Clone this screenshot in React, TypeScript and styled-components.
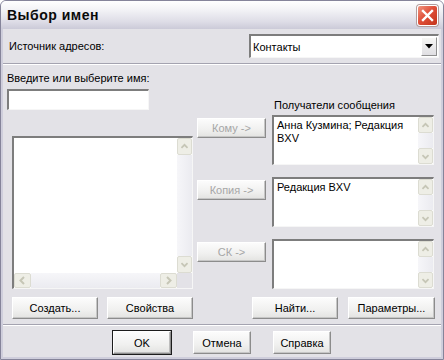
import styled, { createGlobalStyle } from 'styled-components';

const GlobalStyle = createGlobalStyle`
  html, body {
    margin: 0;
    padding: 0;
    background: #ffffff;
  }
  body {
    font-family: 'Liberation Sans', Arial, sans-serif;
    font-size: 11px;
    color: #000;
  }
`;

type Dir = 'up' | 'down' | 'left' | 'right';

const chevrons: Record<Dir, string> = {
  up: 'M4 9 L7.5 5.5 L11 9',
  down: 'M4 6 L7.5 9.5 L11 6',
  left: 'M9 4 L5.5 7.5 L9 11',
  right: 'M6 4 L9.5 7.5 L6 11',
};

const Chevron = ({ dir }: { dir: Dir }) => (
  <svg width="15" height="15" viewBox="0 0 15 15">
    <path d={chevrons[dir]} fill="none" stroke="#c6c6b6" strokeWidth="2" />
  </svg>
);

const App = () => {
  return (
    <>
      <GlobalStyle />
      <Window>
        <TitleBar>
          <Title>Выбор имен</Title>
          <CloseButton>
            <svg width="13" height="13" viewBox="0 0 13 13">
              <path d="M2 2 L11 11 M11 2 L2 11" stroke="#fff" strokeWidth="2.4" strokeLinecap="square" />
            </svg>
          </CloseButton>
        </TitleBar>
        <Body>
          <SourceRow>
            <Label>Источник адресов:</Label>
            <Combo>
              <ComboText>Контакты</ComboText>
              <DropButton>
                <svg width="8" height="5" viewBox="0 0 8 5">
                  <path d="M0 0 H8 L4 4.5 Z" fill="#000" />
                </svg>
              </DropButton>
            </Combo>
          </SourceRow>
          <Etched />
          <Main>
            <LeftCol>
              <Label>Введите или выберите имя:</Label>
              <NameInput />
              <ListBox>
                <ListArea />
                <VScroll>
                  <ScrollBtn $w={15} $h={17}><Chevron dir="up" /></ScrollBtn>
                  <Track $vertical />
                  <ScrollBtn $w={15} $h={17}><Chevron dir="down" /></ScrollBtn>
                </VScroll>
                <HScroll>
                  <ScrollBtn $w={17} $h={15}><Chevron dir="left" /></ScrollBtn>
                  <Track />
                  <ScrollBtn $w={17} $h={15}><Chevron dir="right" /></ScrollBtn>
                </HScroll>
                <Corner />
              </ListBox>
            </LeftCol>
            <RecipientsCol>
              <RecipientsLabel>Получатели сообщения</RecipientsLabel>
              {[
                { btn: 'Кому ->', text: 'Анна Кузмина; Редакция BXV' },
                { btn: 'Копия ->', text: 'Редакция BXV' },
                { btn: 'СК ->', text: '' },
              ].map((r) => (
                <RecipientRow key={r.btn}>
                  <Button $disabled $w={69} $h={20}>{r.btn}</Button>
                  <RecipientBox>
                    <BoxText>{r.text}</BoxText>
                    <VScroll>
                      <ScrollBtn $w={15} $h={16}><Chevron dir="up" /></ScrollBtn>
                      <Track $vertical />
                      <ScrollBtn $w={15} $h={16}><Chevron dir="down" /></ScrollBtn>
                    </VScroll>
                  </RecipientBox>
                </RecipientRow>
              ))}
            </RecipientsCol>
          </Main>
          <ActionRow>
            <ButtonGroup $gap={9}>
              <Button $w={86} $h={22}>Создать...</Button>
              <Button $w={86} $h={22}>Свойства</Button>
            </ButtonGroup>
            <ButtonGroup $gap={10}>
              <Button $w={86} $h={22}>Найти...</Button>
              <Button $w={87} $h={22}>Параметры...</Button>
            </ButtonGroup>
          </ActionRow>
          <Etched $top={5} />
          <Footer>
            <Button $default $w={58} $h={23}>OK</Button>
            <Button $w={58} $h={23}>Отмена</Button>
            <Button $w={58} $h={23}>Справка</Button>
          </Footer>
        </Body>
      </Window>
    </>
  );
};

export default App;

const Window = styled.div`
  width: 444px;
  height: 360px;
  box-sizing: border-box;
  display: flex;
  flex-direction: column;
  background: #cfcedc;
  border: 1px solid #85849a;
  border-radius: 6px 6px 0 0;
  overflow: hidden;
`;

const TitleBar = styled.div`
  height: 28px;
  flex-shrink: 0;
  display: flex;
  align-items: center;
  justify-content: space-between;
  padding: 0 5px 0 6px;
  background: linear-gradient(#ffffff 0%, #f1f1f5 35%, #dddce6 75%, #cbcad8 100%);
`;

const Title = styled.div`
  font-family: 'Liberation Sans', Arial, sans-serif;
  font-size: 14px;
  font-weight: bold;
  letter-spacing: 0.5px;
  color: #0a0a0a;
`;

const CloseButton = styled.div`
  width: 21px;
  height: 21px;
  box-sizing: border-box;
  display: flex;
  align-items: center;
  justify-content: center;
  border: 1px solid #ffffff;
  border-radius: 3px;
  background: linear-gradient(135deg, #f09580 0%, #e0503a 45%, #c3331a 100%);
  box-shadow: 0 0 0 1px #b09c9c;
`;

const Body = styled.div`
  flex: 1;
  display: flex;
  flex-direction: column;
  margin: 0 2px 2px;
  background: #e3e2e7;
`;

const SourceRow = styled.div`
  height: 34px;
  display: flex;
  align-items: center;
  justify-content: space-between;
  padding: 0 2px 0 6px;
`;

const Label = styled.div`
  line-height: 14px;
  white-space: nowrap;
`;

const Sunken = styled.div`
  box-sizing: border-box;
  background: #ffffff;
  border-style: solid;
  border-width: 2px 1px 1px 2px;
  border-color: #7d7d7d #f6f6f6 #f6f6f6 #7d7d7d;
`;

const Combo = styled(Sunken)`
  width: 190px;
  height: 24px;
  display: flex;
  align-items: center;
  justify-content: space-between;
  padding: 0 1px 0 2px;
`;

const ComboText = styled.span`
  font-size: 11px;
`;

const DropButton = styled.div`
  width: 16px;
  height: 19px;
  box-sizing: border-box;
  display: flex;
  align-items: center;
  justify-content: center;
  background: linear-gradient(#f6f6f4, #e0dfe3);
  border: 1px solid;
  border-color: #ffffff #8f8f8f #8f8f8f #ffffff;
`;

const Etched = styled.div<{ $top?: number }>`
  height: 0;
  margin-top: ${(p) => p.$top ?? 0}px;
  border-top: 1px solid #a4a3b0;
  border-bottom: 1px solid #ffffff;
`;

const Main = styled.div`
  display: flex;
  gap: 4px;
  padding: 0 7px 0 4px;
`;

const LeftCol = styled.div`
  width: 186px;
  display: flex;
  flex-direction: column;
  padding-top: 6px;
`;

const NameInput = styled(Sunken)`
  width: 142px;
  height: 21px;
  margin-top: 4px;
`;

const ListBox = styled(Sunken)`
  width: 181px;
  height: 153px;
  margin: 26px 0 0 5px;
  display: grid;
  grid-template-columns: 1fr 15px;
  grid-template-rows: 1fr 15px;
`;

const ListArea = styled.div`
  background: #ffffff;
`;

const VScroll = styled.div`
  display: flex;
  flex-direction: column;
`;

const HScroll = styled.div`
  display: flex;
`;

const Corner = styled.div`
  background: #e3e2e7;
`;

const ScrollBtn = styled.div<{ $w: number; $h: number }>`
  width: ${(p) => p.$w}px;
  height: ${(p) => p.$h}px;
  box-sizing: border-box;
  flex-shrink: 0;
  display: flex;
  align-items: center;
  justify-content: center;
  background: #eeeee6;
  border: 1px solid #dcdcd2;
  border-radius: 2px;
`;

const Track = styled.div<{ $vertical?: boolean }>`
  flex: 1;
  background: ${(p) =>
    p.$vertical
      ? 'linear-gradient(90deg, #f6f6f9, #ebebf0)'
      : 'linear-gradient(#f6f6f9, #ebebf0)'};
`;

const RecipientsCol = styled.div`
  width: 237px;
  display: flex;
  flex-direction: column;
  gap: 12px;
`;

const RecipientsLabel = styled.div`
  margin: 33px 0 -9px 77px;
  line-height: 14px;
  white-space: nowrap;
`;

const RecipientRow = styled.div`
  display: flex;
  align-items: flex-start;
  gap: 6px;
`;

const RecipientBox = styled(Sunken)`
  width: 162px;
  height: 50px;
  display: grid;
  grid-template-columns: 1fr 15px;
`;

const BoxText = styled.div`
  padding: 2px 3px;
  line-height: 13px;
`;

const Button = styled.div<{ $w: number; $h: number; $disabled?: boolean; $default?: boolean }>`
  width: ${(p) => p.$w}px;
  height: ${(p) => p.$h}px;
  box-sizing: border-box;
  flex-shrink: 0;
  margin-top: ${(p) => (p.$disabled ? 3 : 0)}px;
  display: flex;
  align-items: center;
  justify-content: center;
  font-size: 11px;
  color: ${(p) => (p.$disabled ? '#a6a6a6' : '#000')};
  background: linear-gradient(#fcfcfc, #f0f0ef 60%, #e3e3e1);
  border: 1px solid;
  border-color: #ffffff #8c8c8c #8c8c8c #ffffff;
  box-shadow: ${(p) =>
    p.$default ? '0 0 0 1px #1c1c1c, inset -1px -1px #bdbdbd' : 'inset -1px -1px #c6c6c6'};
`;

const ActionRow = styled.div`
  margin-top: 8px;
  display: flex;
  justify-content: space-between;
  padding: 0 6px 0 9px;
`;

const ButtonGroup = styled.div<{ $gap: number }>`
  display: flex;
  gap: ${(p) => p.$gap}px;
`;

const Footer = styled.div`
  margin-top: 5px;
  display: flex;
  justify-content: center;
  gap: 22px;
`;
